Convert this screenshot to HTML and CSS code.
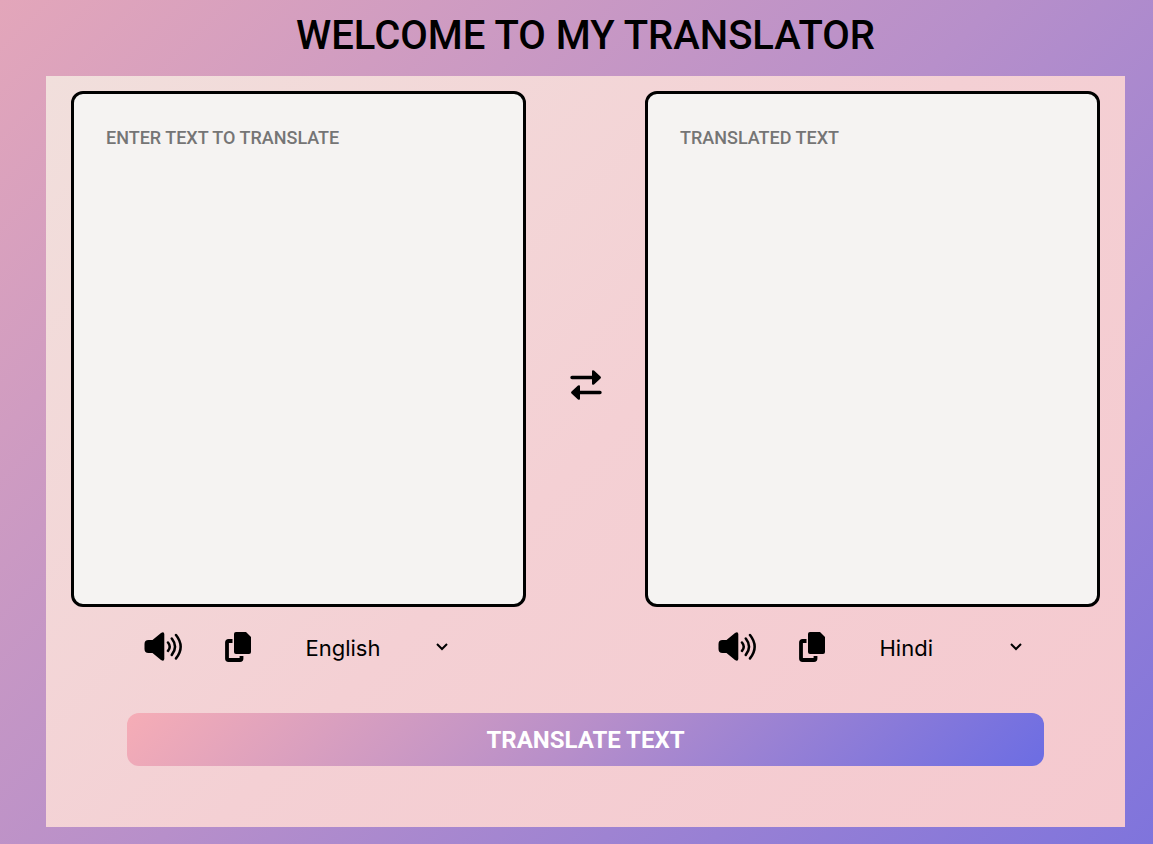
FILE: index.html
```html
<!DOCTYPE html>
<html lang="en">
<head>
<meta charset="utf-8">
<meta name="viewport" content="width=device-width, initial-scale=1">
<title>Translator</title>
<link rel="stylesheet" href="styles.css">
</head>
<body>
<svg class="sprite" aria-hidden="true">
  <symbol id="speaker" viewBox="0 0 40 32">
    <path d="M.5 13q0-4 4-4h4L17 2q3-2 3.300 1v25q-.3 3-3.300 1l-8.500-7h-4q-4 0-4-4z"/>
    <path d="M24 11.500q3.500 4.200 0 8.400M27.800 7.500q6.500 8.200 0 16.400M32 4q9.300 11.700 0 23.400" fill="none" stroke="currentColor" stroke-width="2.500" stroke-linecap="round"/>
  </symbol>
  <symbol id="copy" viewBox="0 0 28 32">
    <path d="M12 1h10l5 5v15q0 2-2 2H12q-2 0-2-2V3q0-2 2-2z"/>
    <path d="M8.500 10H4.500q-1.500 0-1.500 1.500v16Q3 29 4.500 29h11.500q1.500 0 1.500-1.500V25" fill="none" stroke="currentColor" stroke-width="3.800"/>
  </symbol>
  <symbol id="swap" viewBox="0 0 32 32">
    <path d="M2 8.500h22M30 23.500H8" fill="none" stroke="currentColor" stroke-width="3.400" stroke-linecap="round"/>
    <path d="M22 2.500q0-2 2-1l6.500 6q1 1 0 2l-6.500 6q-2 1-2-1zM10 17.500q0-2-2-1l-6.500 6q-1 1 0 2l6.500 6q2 1 2-1z"/>
  </symbol>
</svg>
<main class="page">
  <h1 class="title">WELCOME TO MY TRANSLATOR</h1>
  <section class="panel">
    <div class="columns">
      <div class="column">
        <textarea class="text-area" aria-label="Text to translate" placeholder="ENTER TEXT TO TRANSLATE"></textarea>
        <div class="controls">
          <button class="icon-button" type="button" aria-label="Listen to source text"><svg class="icon-speaker"><use href="#speaker"/></svg></button>
          <button class="icon-button" type="button" aria-label="Copy source text"><svg class="icon-copy"><use href="#copy"/></svg></button>
          <select class="language" aria-label="Source language"><option>English</option><option>Hindi</option></select>
        </div>
      </div>
      <button class="icon-button swap" type="button" aria-label="Swap languages"><svg class="icon-swap"><use href="#swap"/></svg></button>
      <div class="column">
        <textarea class="text-area" aria-label="Translated text" placeholder="TRANSLATED TEXT" readonly></textarea>
        <div class="controls">
          <button class="icon-button" type="button" aria-label="Listen to translation"><svg class="icon-speaker"><use href="#speaker"/></svg></button>
          <button class="icon-button" type="button" aria-label="Copy translation"><svg class="icon-copy"><use href="#copy"/></svg></button>
          <select class="language" aria-label="Target language"><option>Hindi</option><option>English</option></select>
        </div>
      </div>
    </div>
    <button class="translate" type="button">TRANSLATE TEXT</button>
  </section>
</main>
</body>
</html>
```
FILE: styles.css
```css
* {
  box-sizing: border-box;
}

body {
  margin: 0;
  min-height: 100vh;
  font-family: Roboto, "Liberation Sans", sans-serif;
  color: #000;
  background: linear-gradient(135deg, #e3a6ba 0%, #b78fca 50%, #7f74dc 100%);
}

.sprite {
  display: none;
}

.page {
  padding: 11px 28px 17px 46px;
}

.title {
  margin: 0 0 15px;
  font-size: 40px;
  line-height: 50px;
  font-weight: 500;
  text-align: center;
}

.panel {
  padding: 15px 25px 61px;
  background: linear-gradient(135deg, #f1dfdc 0%, #f4d0d4 50%, #f5c9cf 100%);
}

.columns {
  display: grid;
  grid-template-columns: 1fr 119px 1fr;
}

.column {
  display: flex;
  flex-direction: column;
}

.text-area {
  display: block;
  width: 100%;
  height: 516px;
  padding: 32px;
  border: 3px solid #000;
  border-radius: 12px;
  background: #f5f3f2;
  font-family: inherit;
  font-size: 18px;
  line-height: 24px;
  font-weight: 500;
  resize: none;
}

.text-area::placeholder {
  color: #757575;
}

.controls {
  display: flex;
  align-items: center;
  justify-content: center;
  height: 80px;
  gap: 40px;
}

.icon-button {
  display: flex;
  padding: 0;
  border: 0;
  background: none;
  color: #000;
}

.icon-button svg {
  fill: currentColor;
}

.icon-speaker {
  width: 40px;
  height: 32px;
}

.icon-copy {
  width: 28px;
  height: 32px;
}

.icon-swap {
  width: 32px;
  height: 32px;
}

.swap {
  align-self: center;
  justify-self: center;
  padding-bottom: 8px;
}

.language {
  appearance: none;
  width: 162px;
  padding: 2px 24px 0 14px;
  border: 0;
  background: url("data:image/svg+xml,%3Csvg xmlns='http://www.w3.org/2000/svg' width='12' height='8'%3E%3Cpath d='M1 1l5 5 5-5' fill='none' stroke='black' stroke-width='2'/%3E%3C/svg%3E") no-repeat right 6px center;
  color: #000;
  font-family: Inter, sans-serif;
  font-size: 22px;
  font-weight: 400;
}

.translate {
  display: block;
  width: calc(100% - 112px);
  margin: 26px auto 0;
  padding: 2px 0 0;
  border: 0;
  border-radius: 12px;
  background: linear-gradient(135deg, #f6adb6 0%, #b68eca 50%, #6c6de3 100%);
  color: #fff;
  font-family: inherit;
  font-size: 24px;
  line-height: 51px;
  font-weight: 700;
}
```
